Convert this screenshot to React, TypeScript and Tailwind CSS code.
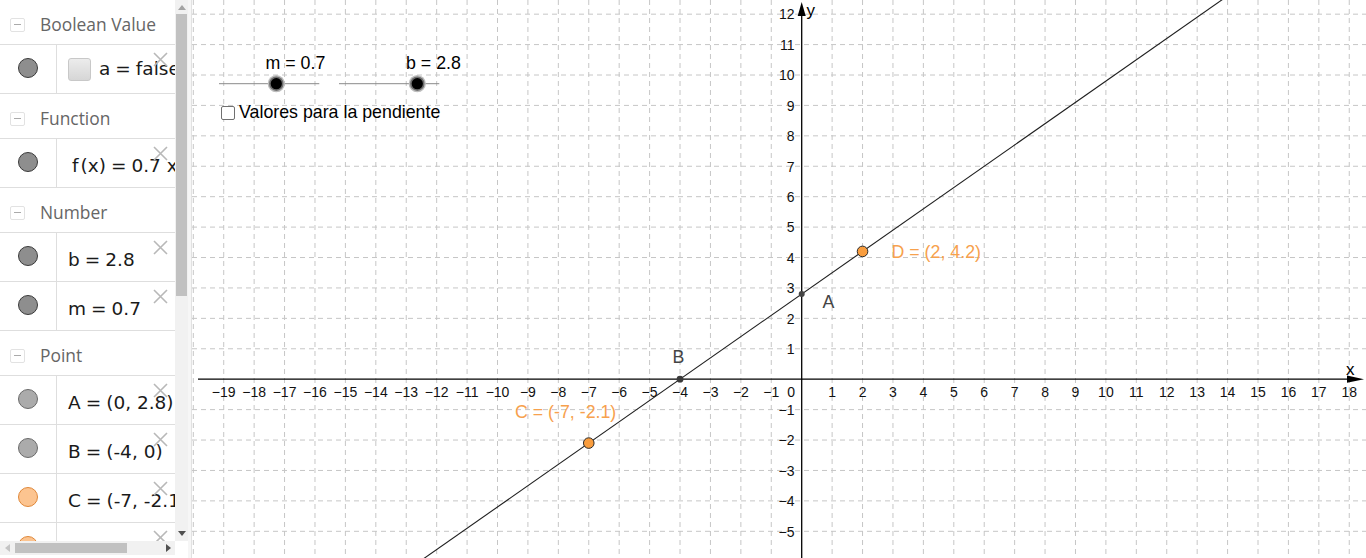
import React from 'react';

const U = 30.42;
const OX = 801.7;
const OY = 379.2;
const sx = (x: number) => OX + x * U;
const sy = (y: number) => OY - y * U;

const num = (n: number) => (n < 0 ? '\u2212' + Math.abs(n) : String(n));

type Marble = 'dark' | 'light' | 'orange';

const marbleClass: Record<Marble, string> = {
  dark: 'bg-[#8e8e8e] border-[#3a3a3a]',
  light: 'bg-[#ababab] border-[#6a6a6a]',
  orange: 'bg-[#fcc490] border-[#e0883a]',
};

const CloseX = () => (
  <svg className="absolute right-[7px] top-[7px]" width="15" height="15" viewBox="0 0 15 15">
    <path d="M1 1L14 14M14 1L1 14" stroke="#b8b8b8" strokeWidth="1.6" fill="none" />
  </svg>
);

const Header = ({ label }: { label: string }) => (
  <div className="h-[45px] shrink-0 border-b border-[#dedede] flex items-center pt-[5px]">
    <div className="ml-[10px] w-[15px] h-[14px] rounded-[2px] border border-[#e2e2e2] flex items-center justify-center">
      <div className="w-[7px] h-[1px] bg-[#aaaaaa]" />
    </div>
    <span className="ml-[15px] text-[17.4px] leading-none text-[#666666] font-['Open_Sans',sans-serif]">{label}</span>
  </div>
);

const Item = ({ marble, children, pl = 11 }: { marble: Marble; children: React.ReactNode; pl?: number }) => (
  <div className="h-[49px] shrink-0 border-b border-[#dedede] flex">
    <div className="w-[57px] shrink-0 border-r border-[#dedede] flex justify-center pt-[13px]">
      <div className={`w-[20px] h-[20px] rounded-full border ${marbleClass[marble]}`} />
    </div>
    <div className="relative flex-1 overflow-hidden">
      <div
        className="whitespace-nowrap text-[18.5px] leading-[18px] text-[#1a1a1a] font-['DejaVu_Sans',sans-serif] pt-[18px]"
        style={{ paddingLeft: pl }}
      >
        {children}
      </div>
      <CloseX />
    </div>
  </div>
);

const Eq = () => <span className="mx-[5px]">=</span>;

const AlgebraPanel = () => (
  <div className="w-[192px] shrink-0 flex h-full">
    <div className="w-[175px] flex flex-col">
      <div className="h-[541px] flex flex-col overflow-hidden">
        <Header label="Boolean Value" />
        <div className="h-[49px] shrink-0 border-b border-[#dedede] flex">
          <div className="w-[57px] shrink-0 border-r border-[#dedede] flex justify-center pt-[13px]">
            <div className={`w-[20px] h-[20px] rounded-full border ${marbleClass.dark}`} />
          </div>
          <div className="relative flex-1 overflow-hidden flex items-center pl-[11px]">
            <div className="w-[23px] h-[23px] shrink-0 rounded-[3px] border border-[#c8c8c8] bg-gradient-to-b from-[#ececec] to-[#d6d6d6]" />
            <span className="ml-[8px] whitespace-nowrap text-[18.5px] leading-none text-[#1a1a1a] font-['DejaVu_Sans',sans-serif]">
              a<Eq />false
            </span>
            <CloseX />
          </div>
        </div>
        <Header label="Function" />
        <Item marble="dark" pl={15}>
          f<span className="ml-[2px]">(x)</span>
          <Eq />0.7 x
        </Item>
        <Header label="Number" />
        <Item marble="dark">
          b<Eq />2.8
        </Item>
        <Item marble="dark">
          m<Eq />0.7
        </Item>
        <Header label="Point" />
        <Item marble="light">
          A<Eq />(0, 2.8)
        </Item>
        <Item marble="light">
          B<Eq />(-4, 0)
        </Item>
        <Item marble="orange">
          C<Eq />(-7, -2.1)
        </Item>
        <Item marble="orange">
          D<Eq />(2, 4.2)
        </Item>
      </div>
      <div className="h-[14px] bg-[#f1f1f1] flex items-center">
        <div className="w-[14px] flex justify-center">
          <div className="w-0 h-0 border-y-[4px] border-y-transparent border-r-[5px] border-r-[#c4c4c4]" />
        </div>
        <div className="ml-[1px] w-[112px] h-[10px] bg-[#c1c1c1]" />
        <div className="flex-1" />
        <div className="w-[14px] flex justify-center">
          <div className="w-0 h-0 border-y-[4px] border-y-transparent border-l-[5px] border-l-[#505050]" />
        </div>
      </div>
      <div className="h-[3px] bg-white" />
    </div>
    <div className="w-[13px] flex flex-col">
      <div className="h-[541px] bg-[#f1f1f1] flex flex-col items-center">
        <div className="h-[14px] flex items-center">
          <div className="w-0 h-0 border-x-[4px] border-x-transparent border-b-[5px] border-b-[#a3a3a3]" />
        </div>
        <div className="w-[11px] h-[282px] bg-[#c1c1c1]" />
        <div className="flex-1" />
        <div className="h-[16px] flex items-center">
          <div className="w-0 h-0 border-x-[4px] border-x-transparent border-t-[5px] border-t-[#505050]" />
        </div>
      </div>
    </div>
    <div className="w-[4px] bg-[#f6f6f6] border-r border-[#e2e2e2]" />
  </div>
);

const GraphView = () => {
  const vx: number[] = [];
  for (let k = -20; k <= 18; k++) if (k !== 0) vx.push(k);
  const hy: number[] = [];
  for (let j = -5; j <= 12; j++) if (j !== 0) hy.push(j);
  const xl = vx.filter((k) => k >= -19);
  const orange = '#f7a14d';
  const f = (x: number) => 0.7 * x + 2.8;

  return (
    <div className="relative flex-1 h-full bg-white overflow-hidden">
      <svg
        width="1174"
        height="558"
        viewBox="192 0 1174 558"
        className="block"
        fontFamily="'Liberation Sans', Arial, sans-serif"
      >
        {vx.map((k) => (
          <line key={'v' + k} x1={sx(k)} y1={0} x2={sx(k)} y2={558} stroke="#c6c6c6" strokeDasharray="5 4" />
        ))}
        {hy.map((j) => (
          <line key={'h' + j} x1={192} y1={sy(j)} x2={1366} y2={sy(j)} stroke="#c6c6c6" strokeDasharray="5 4" />
        ))}

        {/* axes */}
        <line x1={198} y1={OY} x2={1350} y2={OY} stroke="#000" strokeWidth="1.3" />
        <path d={`M1364 ${OY} L1347 ${OY - 3.6} L1347 ${OY + 3.6} Z`} fill="#000" />
        <line x1={OX} y1={558} x2={OX} y2={12} stroke="#000" strokeWidth="1.3" />
        <path d={`M${OX} 2 L${OX - 4} 16 L${OX + 4} 16 Z`} fill="#000" />
        <text x={1346} y={375} fontSize="17" fill="#000">x</text>
        <text x={806.5} y={16} fontSize="17" fill="#000">y</text>

        {xl.map((k) => (
          <text key={'xl' + k} x={sx(k)} y={397} fontSize="14" textAnchor="middle" fill="#111">
            {num(k)}
          </text>
        ))}
        <text x={795} y={397} fontSize="14" textAnchor="end" fill="#111">0</text>
        {hy.map((j) => (
          <text key={'yl' + j} x={794.5} y={sy(j) + 5.3} fontSize="14" textAnchor="end" fill="#111">
            {num(j)}
          </text>
        ))}

        {/* f(x) = 0.7x + 2.8 */}
        <line x1={sx(-20)} y1={sy(f(-20))} x2={sx(16)} y2={sy(f(16))} stroke="#1e1e1e" strokeWidth="1.1" />

        {/* points */}
        <circle cx={sx(0)} cy={sy(2.8)} r="3" fill="#444" />
        <circle cx={sx(-4)} cy={sy(0)} r="3.4" fill="#3a3a3a" />
        <circle cx={sx(-7)} cy={sy(-2.1)} r="5.3" fill="#f99d3e" stroke="#2a2a2a" strokeWidth="1" />
        <circle cx={sx(2)} cy={sy(4.2)} r="5.3" fill="#f99d3e" stroke="#2a2a2a" strokeWidth="1" />

        <text x={822.5} y={308.3} fontSize="17.8" fill="#444">A</text>
        <text x={672.5} y={363.3} fontSize="17.8" fill="#444">B</text>
        <text x={515} y={418} fontSize="17.8" fill={orange}>C = (-7, -2.1)</text>
        <text x={891.5} y={257.8} fontSize="17.8" fill={orange}>D = (2, 4.2)</text>

        {/* sliders */}
        <text x={265.5} y={69} fontSize="17.8" fill="#000">m = 0.7</text>
        <line x1={219} y1={83.7} x2={319.3} y2={83.7} stroke="#8a8a8a" strokeWidth="1" />
        <circle cx={276.3} cy={83.7} r="8.6" fill="#bdbdbd" />
        <circle cx={276.3} cy={83.7} r="7.2" fill="#6e6e6e" />
        <circle cx={276.3} cy={83.7} r="5.6" fill="#000" />

        <text x={406} y={69} fontSize="17.8" fill="#000">b = 2.8</text>
        <line x1={339} y1={83.7} x2={439.3} y2={83.7} stroke="#8a8a8a" strokeWidth="1" />
        <circle cx={417.3} cy={83.7} r="8.6" fill="#bdbdbd" />
        <circle cx={417.3} cy={83.7} r="7.2" fill="#6e6e6e" />
        <circle cx={417.3} cy={83.7} r="5.6" fill="#000" />
      </svg>

      <div className="absolute left-[29px] top-[104px] flex items-center">
        <div className="w-[14px] h-[14px] rounded-[2px] border border-[#707070] bg-white" />
        <span className="ml-[4px] text-[17.8px] leading-none text-[#000] font-['Liberation_Sans',Arial,sans-serif]">
          Valores para la pendiente
        </span>
      </div>
    </div>
  );
};

export default function App() {
  return (
    <div className="w-[1366px] h-[558px] flex bg-white overflow-hidden">
      <AlgebraPanel />
      <GraphView />
    </div>
  );
}
